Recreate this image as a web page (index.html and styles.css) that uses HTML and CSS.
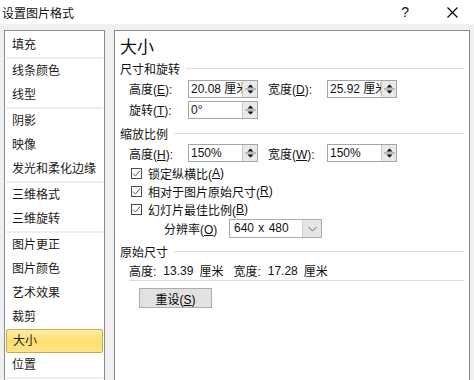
FILE: index.html
```html
<!DOCTYPE html>
<html>
<head>
    <title>设置图片格式</title>
    <link rel="stylesheet" href="styles.css">
</head>
<body>
    <div class="titlebar">
        <span class="title">设置图片格式</span>
        <span class="help">?</span>
        <span class="close">
            <svg width="11" height="11" viewBox="0 0 11 11"><path d="M0.5 0.5 L10.5 10.5 M10.5 0.5 L0.5 10.5" stroke="#000" stroke-width="1.1" fill="none"/></svg>
        </span>
    </div>
    <div class="main">
        <ul class="nav">
            <li>填充</li>
            <li class="sep"></li>
            <li>线条颜色</li>
            <li>线型</li>
            <li class="sep"></li>
            <li>阴影</li>
            <li>映像</li>
            <li>发光和柔化边缘</li>
            <li class="sep"></li>
            <li>三维格式</li>
            <li>三维旋转</li>
            <li class="sep"></li>
            <li>图片更正</li>
            <li>图片颜色</li>
            <li>艺术效果</li>
            <li>裁剪</li>
            <li class="active">大小</li>
            <li>位置</li>
            <li class="sep"></li>
        </ul>
        <div class="panel">
            <h1>大小</h1>
            <div class="section">尺寸和旋转</div>
            <div class="row">
                <label>高度(<u>E</u>):</label>
                <div class="spin"><span class="val">20.08 厘米</span><span class="arrows"><svg width="13" height="14" viewBox="0 0 13 14"><path d="M6.5 2.5 L9.5 5.5 L3.5 5.5 Z M3.5 8.5 L9.5 8.5 L6.5 11.5 Z" fill="#000"/><path d="M1 7 H12" stroke="#8a8a8a"/></svg></span></div>
                <label class="second">宽度(<u>D</u>):</label>
                <div class="spin"><span class="val">25.92 厘米</span><span class="arrows"><svg width="13" height="14" viewBox="0 0 13 14"><path d="M6.5 2.5 L9.5 5.5 L3.5 5.5 Z M3.5 8.5 L9.5 8.5 L6.5 11.5 Z" fill="#000"/><path d="M1 7 H12" stroke="#8a8a8a"/></svg></span></div>
            </div>
            <div class="row">
                <label>旋转(<u>T</u>):</label>
                <div class="spin"><span class="val">0°</span><span class="arrows"><svg width="13" height="14" viewBox="0 0 13 14"><path d="M6.5 2.5 L9.5 5.5 L3.5 5.5 Z M3.5 8.5 L9.5 8.5 L6.5 11.5 Z" fill="#000"/><path d="M1 7 H12" stroke="#8a8a8a"/></svg></span></div>
            </div>
            <div class="section gap">缩放比例</div>
            <div class="row short">
                <label>高度(<u>H</u>):</label>
                <div class="spin"><span class="val">150%</span><span class="arrows"><svg width="13" height="14" viewBox="0 0 13 14"><path d="M6.5 2.5 L9.5 5.5 L3.5 5.5 Z M3.5 8.5 L9.5 8.5 L6.5 11.5 Z" fill="#000"/><path d="M1 7 H12" stroke="#8a8a8a"/></svg></span></div>
                <label class="second">宽度(<u>W</u>):</label>
                <div class="spin"><span class="val">150%</span><span class="arrows"><svg width="13" height="14" viewBox="0 0 13 14"><path d="M6.5 2.5 L9.5 5.5 L3.5 5.5 Z M3.5 8.5 L9.5 8.5 L6.5 11.5 Z" fill="#000"/><path d="M1 7 H12" stroke="#8a8a8a"/></svg></span></div>
            </div>
            <div class="check first">
                <span class="box"><svg width="11" height="11" viewBox="0 0 11 11"><path d="M2 5.5 L4.5 8 L9 2.5" stroke="#555" stroke-width="1" fill="none"/></svg></span>
                锁定纵横比(<u>A</u>)
            </div>
            <div class="check">
                <span class="box"><svg width="11" height="11" viewBox="0 0 11 11"><path d="M2 5.5 L4.5 8 L9 2.5" stroke="#555" stroke-width="1" fill="none"/></svg></span>
                相对于图片原始尺寸(<u>R</u>)
            </div>
            <div class="check">
                <span class="box"><svg width="11" height="11" viewBox="0 0 11 11"><path d="M2 5.5 L4.5 8 L9 2.5" stroke="#555" stroke-width="1" fill="none"/></svg></span>
                幻灯片最佳比例(<u>B</u>)
            </div>
            <div class="row res">
                <label>分辨率(<u>O</u>)</label>
                <div class="select"><span class="val">640 x 480</span><span class="drop"><svg width="9" height="6" viewBox="0 0 9 6"><path d="M0.5 1 L4.5 5 L8.5 1" stroke="#666" fill="none"/></svg></span></div>
            </div>
            <div class="section orig-head">原始尺寸</div>
            <div class="orig">
                <span>高度:</span><span class="num">13.39</span><span>厘米</span>
                <span class="wlabel">宽度:</span><span class="num">17.28</span><span>厘米</span>
            </div>
            <button class="reset">重设(<u>S</u>)</button>
        </div>
    </div>
</body>
</html>
```

FILE: styles.css
```css
* {
    box-sizing: border-box;
}

body {
    margin: 0;
    height: 380px;
    overflow: hidden;
    background: #f0f0f0;
    font-family: "Liberation Sans", "Noto Sans CJK SC", sans-serif;
    font-size: 12px;
    color: #111;
}

u {
    text-decoration: underline;
    text-underline-offset: 1px;
}

.titlebar {
    height: 24px;
    background: #fff;
    display: flex;
    align-items: center;
    padding-left: 2px;
}

.title {
    flex: 1;
    font-size: 12px;
}

.help {
    font-size: 14px;
    margin-right: 38px;
}

.close {
    display: flex;
    margin-right: 16px;
}

.main {
    display: flex;
    padding: 6px 4px 0 4px;
    height: 420px;
}

.nav {
    list-style: none;
    margin: 0;
    padding: 2px 0 0;
    width: 101px;
    background: #fff;
    border: 1px solid #898c93;
}

.nav li {
    height: 24px;
    line-height: 24px;
    padding-left: 7px;
    white-space: nowrap;
    color: #1a1a1a;
}

.nav li.sep {
    height: 2px;
    margin: 0 1px;
    background: #eceef4;
}

.nav li.active {
    margin: 0 1px;
    padding-left: 6px;
    border: 1px solid #c9a84e;
    border-radius: 2px;
    line-height: 22px;
    background: linear-gradient(#fdeca6, #ffdd6c 55%, #ffe48c);
}

.panel {
    margin-left: 9px;
    width: 356px;
    background: #fff;
    border: 1px solid #898c93;
    padding: 7px 5px 0 5px;
}

h1 {
    margin: 0;
    height: 20px;
    line-height: 20px;
    font-size: 17px;
    font-weight: normal;
}

.section {
    display: flex;
    align-items: center;
    height: 20px;
}

.section::after {
    content: "";
    flex: 1;
    height: 1px;
    margin-left: 6px;
    background: #dcdcdc;
}

.section.gap {
    margin-top: 3px;
}

.section.orig-head {
    margin-top: 2px;
}

.row {
    display: flex;
    align-items: center;
    height: 21px;
    padding-left: 9px;
}

.row.short {
    height: 20px;
}

.row label {
    width: 59px;
}

.row label.second {
    margin-left: 10px;
    width: 59px;
}

.spin {
    position: relative;
    width: 70px;
    height: 18px;
    border: 1px solid #a5a5a5;
    padding-left: 2px;
    line-height: 16px;
    overflow: hidden;
    white-space: nowrap;
}

.spin .arrows {
    position: absolute;
    right: 0;
    top: 0;
    width: 15px;
    height: 16px;
    background: #e9e9e9;
    border-left: 1px solid #c8c8c8;
    display: flex;
    align-items: center;
    justify-content: center;
}

.check {
    display: flex;
    align-items: center;
    height: 18px;
    padding-left: 11px;
}

.check.first {
    margin-top: 1px;
}

.check .box {
    width: 11px;
    height: 11px;
    border: 1px solid #4d4d4d;
    margin-right: 6px;
    display: flex;
    background: #fff;
}

.check .box svg {
    margin: -1px;
}

.row.res {
    padding-left: 44px;
}

.row.res label {
    width: 65px;
}

.select {
    display: flex;
    width: 93px;
    height: 19px;
    border: 1px solid #acacac;
}

.select .val {
    flex: 1;
    line-height: 17px;
    padding-left: 4px;
    word-spacing: 1px;
}

.select .drop {
    width: 19px;
    background: #e5e5e5;
    border-left: 1px solid #d0d0d0;
    display: flex;
    align-items: center;
    justify-content: center;
}

.orig {
    display: flex;
    align-items: center;
    height: 20px;
    margin-left: 9px;
    border-bottom: 1px solid #dcdcdc;
}

.orig .num {
    margin: 0 6px 0 7px;
}

.orig .wlabel {
    margin-left: 10px;
}

.reset {
    display: block;
    margin: 7px 0 0 19px;
    width: 73px;
    height: 20px;
    padding: 0;
    background: #e1e1e1;
    border: 1px solid #adadad;
    font-family: inherit;
    font-size: 12px;
    color: #000;
}
```
